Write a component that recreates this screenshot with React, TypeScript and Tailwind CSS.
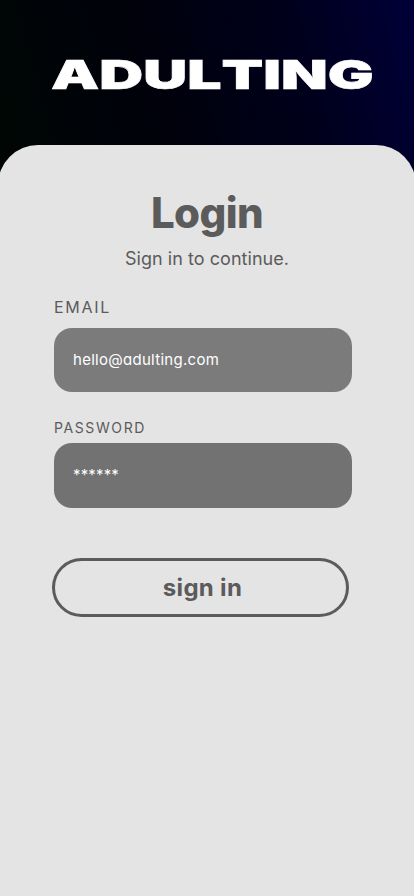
import React from "react";

export default function App() {
  return (
    <main className="flex h-[896px] w-[414px] flex-col overflow-hidden bg-[linear-gradient(75deg,#000603_0%,#00010b_40%,#00001c_72%,#000038_100%)] bg-[length:100%_190px] bg-no-repeat font-['Inter',sans-serif] text-[#5b5b5b]">
      <header className="h-[145px] shrink-0 pt-[55px] pl-[51px]">
        <h1 className="w-max origin-left scale-x-[1.52] text-[40px] leading-10 font-black whitespace-nowrap text-white [-webkit-text-stroke:0.6px_white] [font-kerning:none]">
          ADULTING
        </h1>
      </header>
      <section className="-mx-0.5 flex grow flex-col rounded-t-[40px] bg-[#e4e4e4] px-[56px]">
        <h2 className="mt-[43px] text-center text-[42px] leading-[50px] font-extrabold tracking-[-0.6px]">Login</h2>
        <p className="mt-[9px] text-center text-[18px] leading-6 tracking-[0.05px]">Sign in to continue.</p>
        <label className="mt-[24px] text-[16px] leading-6 tracking-[1.7px]">EMAIL</label>
        <div className="mt-[9px] flex h-16 w-[298px] items-center rounded-[18px] bg-[#7b7b7b] pl-[19px] text-[15px] tracking-[0.28px] text-white [font-feature-settings:'cv11']">
          hello@adulting.com
        </div>
        <label className="mt-[26px] text-[14px] leading-5 tracking-[1.6px]">PASSWORD</label>
        <div className="mt-[5px] flex h-[65px] w-[298px] items-center rounded-[18px] bg-[#727272] pl-[19px] text-[15px] tracking-[0.15px] text-white">
          ******
        </div>
        <button className="mt-[50px] -ml-0.5 flex h-[59px] w-[297px] items-center justify-center rounded-full border-[3px] border-[#5b5b5b] pl-1 text-[24px] font-bold tracking-[0.3px]">
          sign in
        </button>
      </section>
    </main>
  );
}
